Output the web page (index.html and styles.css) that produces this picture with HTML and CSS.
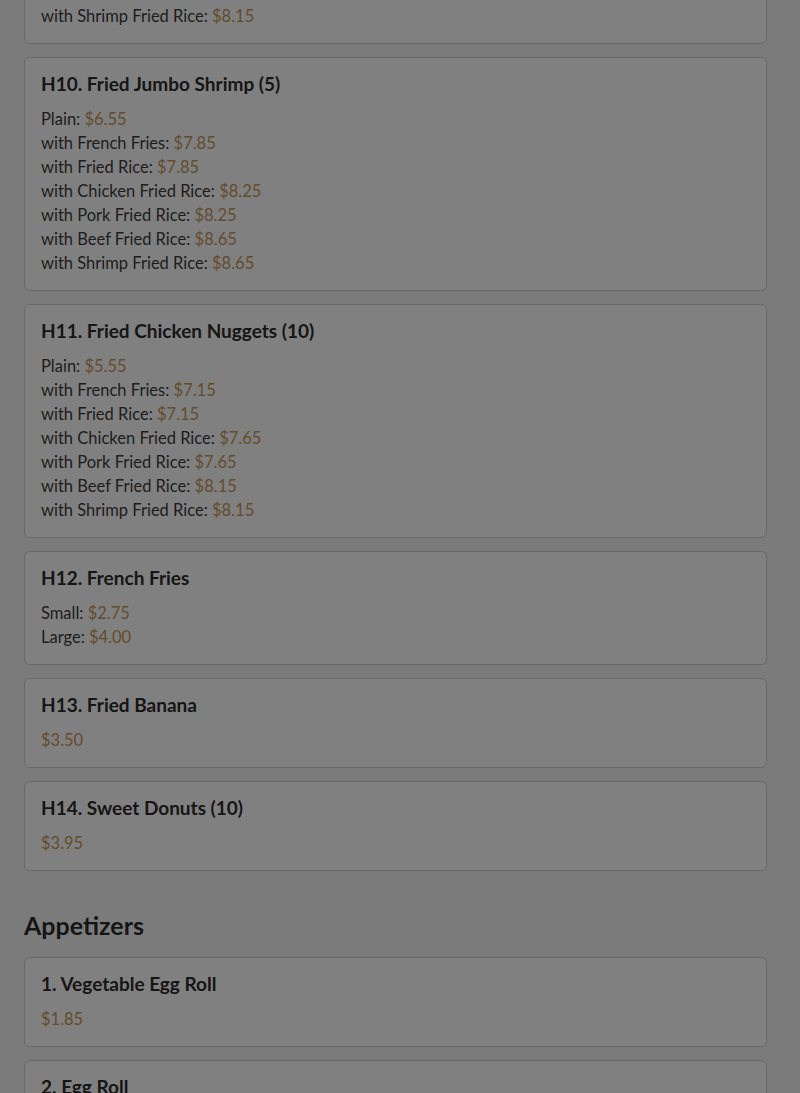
FILE: index.html
```html
<!DOCTYPE html>
<html>
<head>
<meta charset="utf-8">
<link rel="stylesheet" href="styles.css">
</head>
<body>
<main class="menu">
  <section class="section">
    <div class="card">
      <h3 class="card-title">H9. Fried Chicken Wings (4)</h3>
      <ul class="prices">
        <li>Plain: <span class="price">$5.55</span></li>
        <li>with French Fries: <span class="price">$7.15</span></li>
        <li>with Fried Rice: <span class="price">$7.15</span></li>
        <li>with Chicken Fried Rice: <span class="price">$7.65</span></li>
        <li>with Pork Fried Rice: <span class="price">$7.65</span></li>
        <li>with Beef Fried Rice: <span class="price">$8.15</span></li>
        <li>with Shrimp Fried Rice: <span class="price">$8.15</span></li>
      </ul>
    </div>
    <div class="card">
      <h3 class="card-title">H10. Fried Jumbo Shrimp (5)</h3>
      <ul class="prices">
        <li>Plain: <span class="price">$6.55</span></li>
        <li>with French Fries: <span class="price">$7.85</span></li>
        <li>with Fried Rice: <span class="price">$7.85</span></li>
        <li>with Chicken Fried Rice: <span class="price">$8.25</span></li>
        <li>with Pork Fried Rice: <span class="price">$8.25</span></li>
        <li>with Beef Fried Rice: <span class="price">$8.65</span></li>
        <li>with Shrimp Fried Rice: <span class="price">$8.65</span></li>
      </ul>
    </div>
    <div class="card">
      <h3 class="card-title">H11. Fried Chicken Nuggets (10)</h3>
      <ul class="prices">
        <li>Plain: <span class="price">$5.55</span></li>
        <li>with French Fries: <span class="price">$7.15</span></li>
        <li>with Fried Rice: <span class="price">$7.15</span></li>
        <li>with Chicken Fried Rice: <span class="price">$7.65</span></li>
        <li>with Pork Fried Rice: <span class="price">$7.65</span></li>
        <li>with Beef Fried Rice: <span class="price">$8.15</span></li>
        <li>with Shrimp Fried Rice: <span class="price">$8.15</span></li>
      </ul>
    </div>
    <div class="card">
      <h3 class="card-title">H12. French Fries</h3>
      <ul class="prices">
        <li>Small: <span class="price">$2.75</span></li>
        <li>Large: <span class="price">$4.00</span></li>
      </ul>
    </div>
    <div class="card">
      <h3 class="card-title">H13. Fried Banana</h3>
      <ul class="prices">
        <li><span class="price">$3.50</span></li>
      </ul>
    </div>
    <div class="card">
      <h3 class="card-title">H14. Sweet Donuts (10)</h3>
      <ul class="prices">
        <li><span class="price">$3.95</span></li>
      </ul>
    </div>
  </section>
  <section class="section">
    <h2 class="section-title">Appetizers</h2>
    <div class="card">
      <h3 class="card-title">1. Vegetable Egg Roll</h3>
      <ul class="prices">
        <li><span class="price">$1.85</span></li>
      </ul>
    </div>
    <div class="card">
      <h3 class="card-title">2. Egg Roll</h3>
      <ul class="prices">
        <li><span class="price">$1.85</span></li>
      </ul>
    </div>
  </section>
</main>
</body>
</html>
```

FILE: styles.css
```css
html, body {
  margin: 0;
  padding: 0;
  background: #7b7b7b;
  overflow: hidden;
}
body {
  font-family: Lato, "Open Sans", sans-serif;
  color: #1c1c1c;
}
.menu {
  margin-top: -190px;
  padding: 0 33px 0 24px;
  display: flex;
  flex-direction: column;
}
.section {
  display: flex;
  flex-direction: column;
  gap: 13px;
}
.section + .section {
  margin-top: 38px;
}
.section-title {
  margin: 0 0 3px;
  font-size: 25px;
  line-height: 32px;
  font-weight: 700;
  color: #151515;
}
.card {
  background: #808080;
  border: 1px solid #686868;
  border-radius: 6px;
  padding: 16px 16px 15px;
}
.card-title {
  margin: 0 0 13px;
  font-size: 19px;
  line-height: 20px;
  font-weight: 700;
  color: #151515;
}
.prices {
  list-style: none;
  margin: 0;
  padding: 0;
  font-size: 16.5px;
  line-height: 24px;
}
.price {
  color: #624c2c;
}
```
